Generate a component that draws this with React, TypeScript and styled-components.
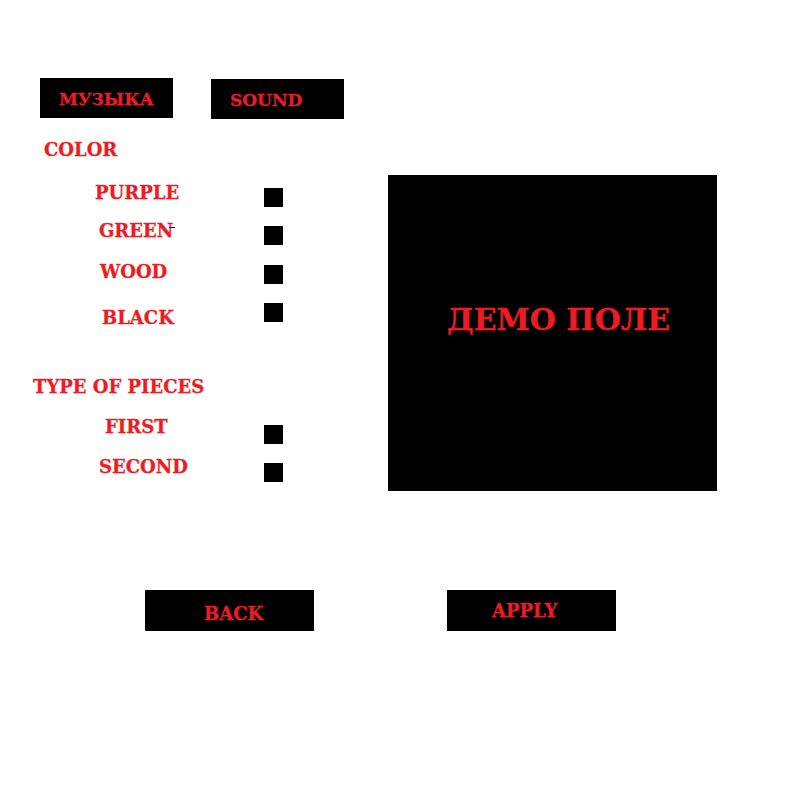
import React from "react";
import styled, { createGlobalStyle } from "styled-components";

const GlobalStyle = createGlobalStyle`
  html, body {
    margin: 0;
    padding: 0;
    background: #ffffff;
  }
`;

const RED = "#ed1c24";

const Screen = styled.div`
  width: 800px;
  height: 800px;
  padding-top: 78px;
  box-sizing: border-box;
  background: #ffffff;
  font-family: "DejaVu Serif", "Liberation Serif", serif;
  font-weight: bold;
  color: ${RED};
  overflow: hidden;
`;

const Label = styled.span<{ $size?: number }>`
  display: block;
  font-size: ${(p) => p.$size ?? 18}px;
  line-height: ${(p) => p.$size ?? 18}px;
  white-space: nowrap;
  -webkit-text-stroke: 0.3px ${RED};
`;

const TopBar = styled.div`
  display: flex;
  align-items: flex-start;
  gap: 38px;
  padding-left: 40px;
  height: 41px;
`;

const MenuButton = styled.div<{ $drop?: number }>`
  width: 133px;
  height: 40px;
  box-sizing: border-box;
  margin-top: ${(p) => p.$drop ?? 0}px;
  padding: 13px 0 0 19px;
  background: #000000;
`;

const Body = styled.div`
  display: flex;
  align-items: flex-start;
`;

const Settings = styled.div`
  width: 388px;
  display: flex;
  flex-direction: column;
`;

const SectionTitle = styled(Label)<{ $indent: number; $gap: number }>`
  padding-left: ${(p) => p.$indent}px;
  margin-top: ${(p) => p.$gap}px;
`;

const OptionRow = styled.div<{ $gap: number }>`
  display: flex;
  align-items: flex-start;
  margin-top: ${(p) => p.$gap}px;
`;

const OptionLabel = styled(Label)<{ $indent: number; $dy: number; $mark?: boolean }>`
  position: relative;
  width: 264px;
  box-sizing: border-box;
  padding-left: ${(p) => p.$indent}px;
  margin-top: ${(p) => p.$dy}px;

  &::after {
    content: "";
    display: ${(p) => (p.$mark ? "block" : "none")};
    position: absolute;
    left: 169px;
    top: 5px;
    width: 6px;
    height: 1px;
    background: #000000;
  }
`;

const CheckBox = styled.div<{ $dy: number }>`
  width: 19px;
  height: 19px;
  margin-top: ${(p) => p.$dy}px;
  background: #000000;
`;

const DemoField = styled.div`
  width: 329px;
  height: 316px;
  margin-top: 56px;
  box-sizing: border-box;
  padding: 130px 0 0 59px;
  background: #000000;
`;

const Footer = styled.div`
  display: flex;
  gap: 133px;
  padding-left: 145px;
  margin-top: 99px;
`;

const ActionButton = styled.div<{ $padTop: number; $padLeft: number }>`
  width: 169px;
  height: 41px;
  box-sizing: border-box;
  padding: ${(p) => p.$padTop}px 0 0 ${(p) => p.$padLeft}px;
  background: #000000;
`;

type Option = {
  label: string;
  gap: number;
  indent: number;
  textDy: number;
  boxDy: number;
  mark?: boolean;
};

const colors: Option[] = [
  { label: "PURPLE", gap: 25, indent: 95, textDy: 0, boxDy: 4 },
  { label: "GREEN", gap: 15, indent: 99, textDy: 0, boxDy: 4, mark: true },
  { label: "WOOD", gap: 18, indent: 100, textDy: 0, boxDy: 2 },
  { label: "BLACK", gap: 19, indent: 102, textDy: 6, boxDy: 0 },
];

const pieces: Option[] = [
  { label: "FIRST", gap: 22, indent: 105, textDy: 0, boxDy: 7 },
  { label: "SECOND", gap: 14, indent: 99, textDy: 0, boxDy: 5 },
];

const OptionList = ({ items }: { items: Option[] }) => (
  <>
    {items.map((o) => (
      <OptionRow key={o.label} $gap={o.gap}>
        <OptionLabel $indent={o.indent} $dy={o.textDy} $mark={o.mark}>
          {o.label}
        </OptionLabel>
        <CheckBox $dy={o.boxDy} />
      </OptionRow>
    ))}
  </>
);

export default function App() {
  return (
    <>
      <GlobalStyle />
      <Screen>
        <TopBar>
          <MenuButton>
            <Label $size={17}>МУЗЫКА</Label>
          </MenuButton>
          <MenuButton $drop={1}>
            <Label $size={17}>SOUND</Label>
          </MenuButton>
        </TopBar>

        <Body>
          <Settings>
            <SectionTitle $indent={44} $gap={22}>COLOR</SectionTitle>
            <OptionList items={colors} />
            <SectionTitle $indent={33} $gap={51}>TYPE OF PIECES</SectionTitle>
            <OptionList items={pieces} />
          </Settings>
          <DemoField>
            <Label $size={30}>ДЕМО ПОЛЕ</Label>
          </DemoField>
        </Body>

        <Footer>
          <ActionButton $padTop={15} $padLeft={59}>
            <Label>BACK</Label>
          </ActionButton>
          <ActionButton $padTop={12} $padLeft={45}>
            <Label>APPLY</Label>
          </ActionButton>
        </Footer>
      </Screen>
    </>
  );
}
